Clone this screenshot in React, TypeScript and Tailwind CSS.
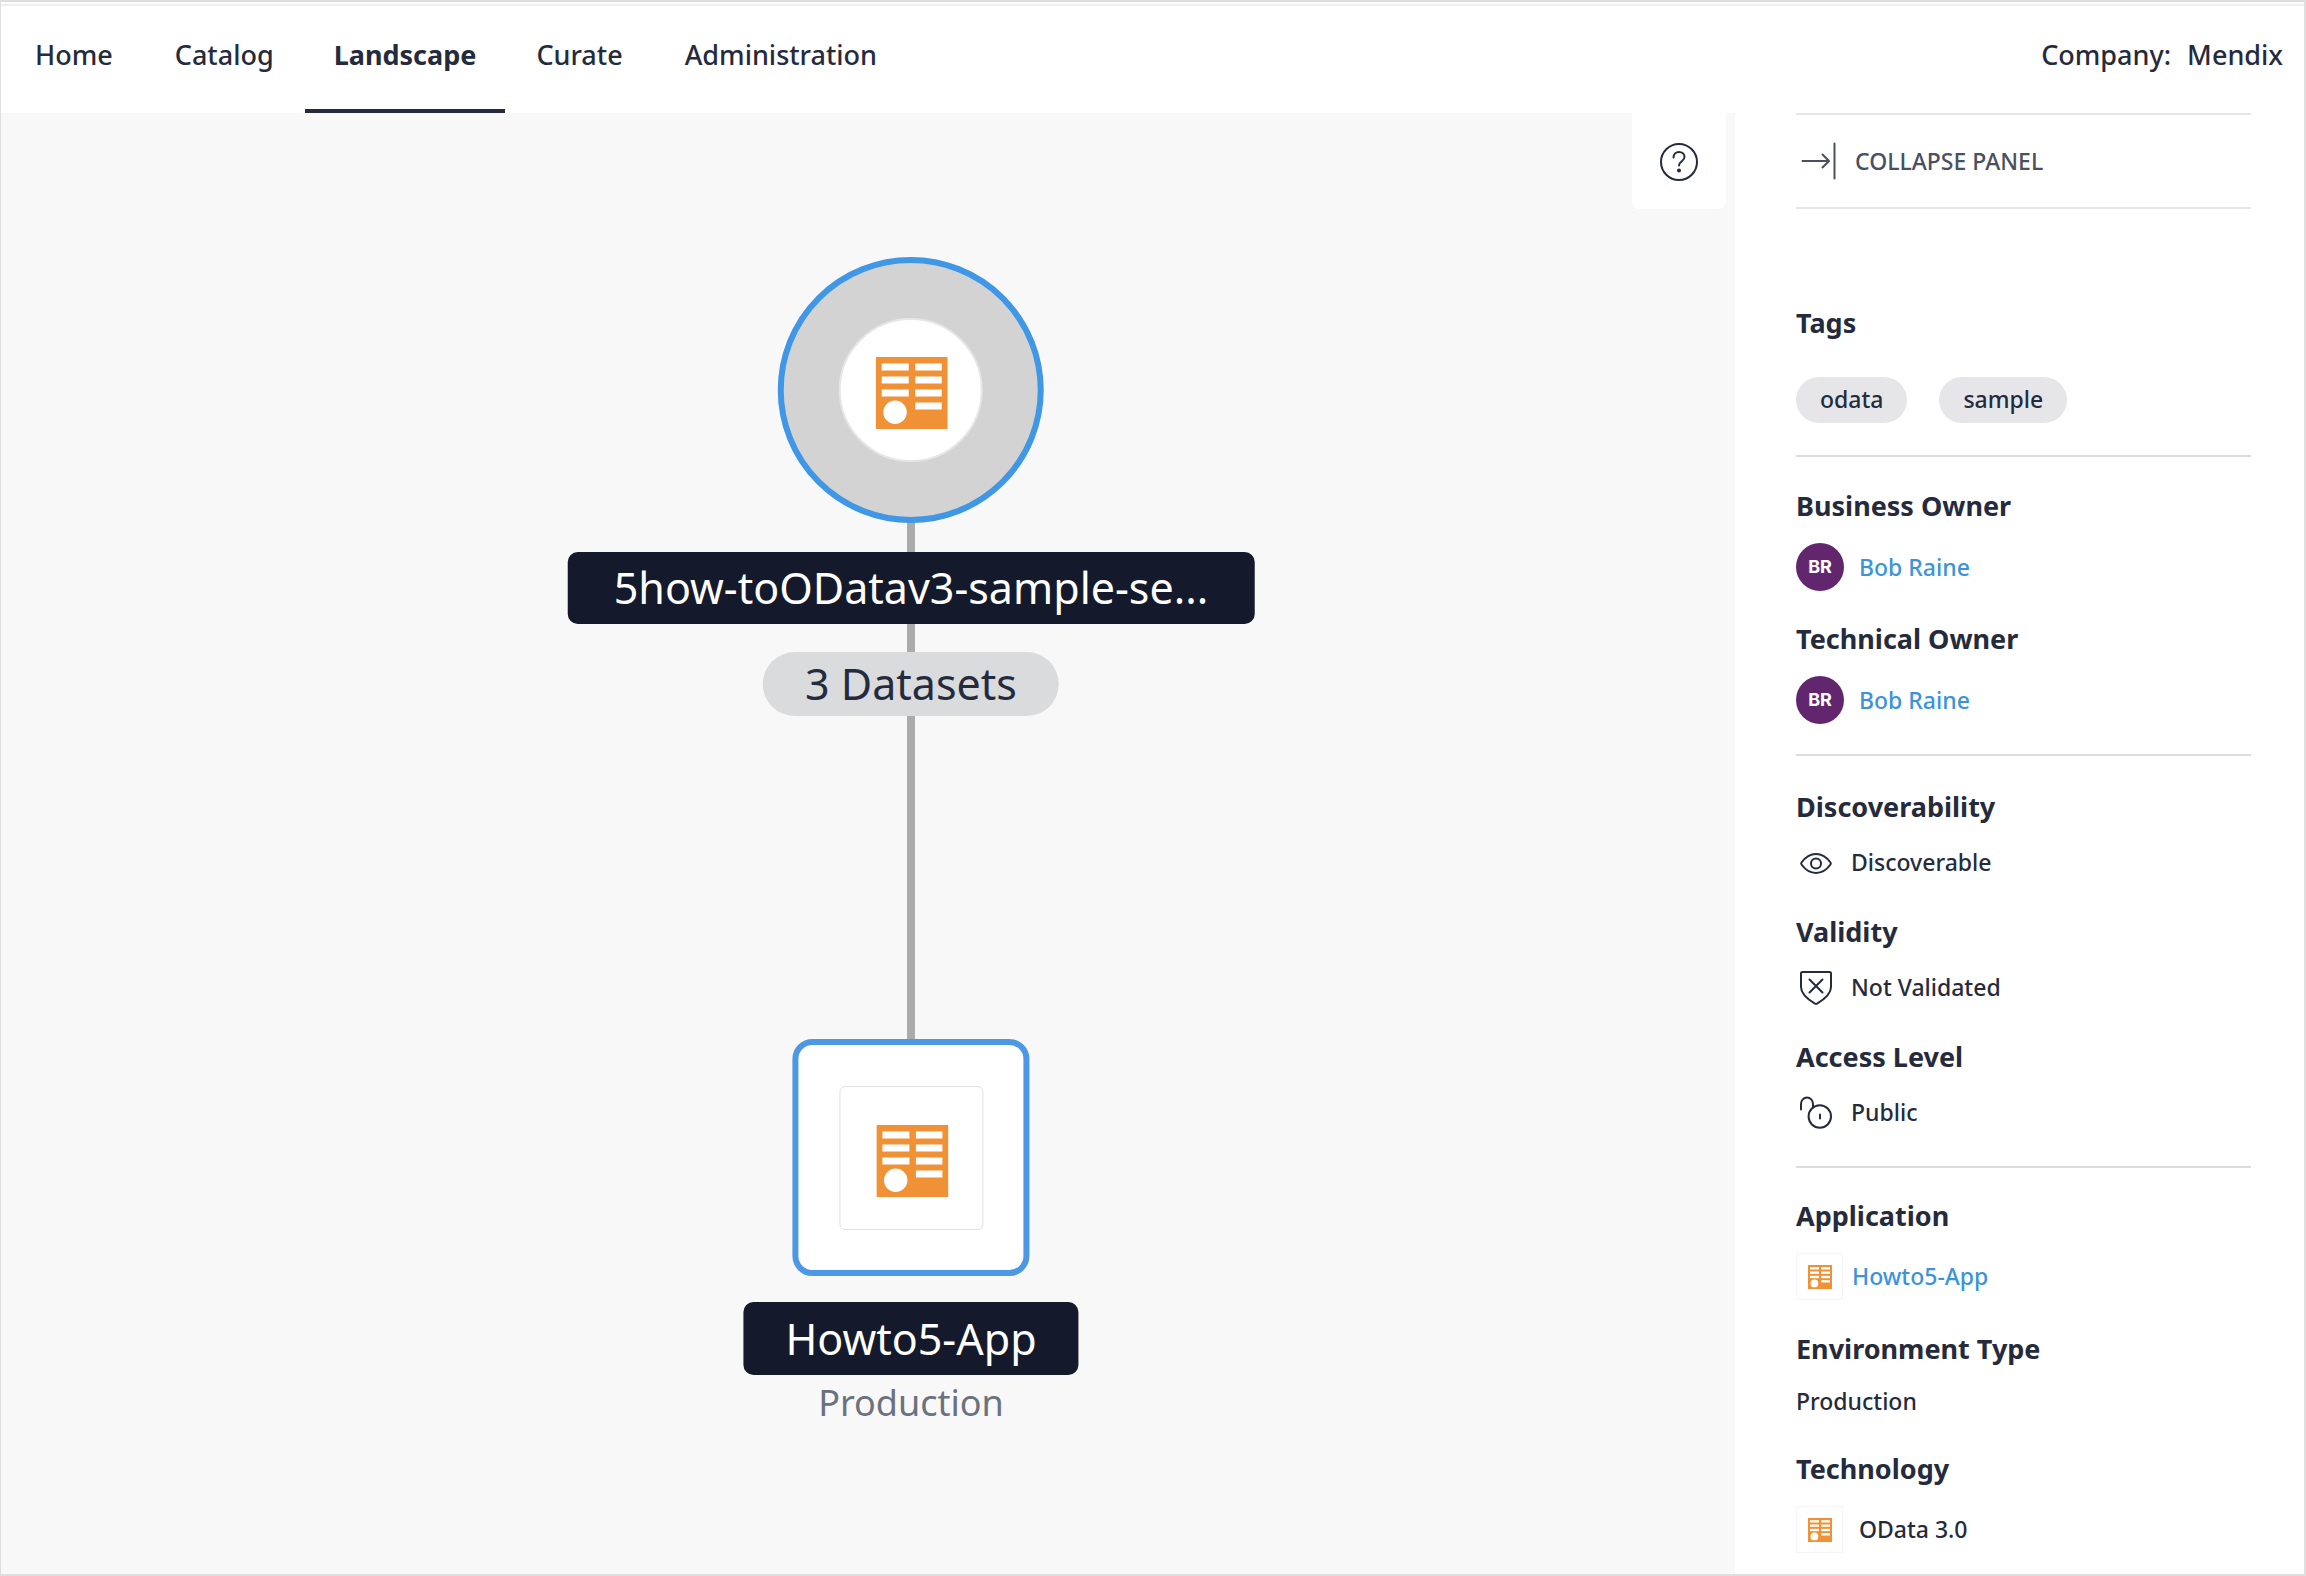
import React from "react";

function DataIcon({ className }: { className: string }) {
  return (
    <svg viewBox="0 0 72 72" className={className} aria-hidden="true">
      <rect width="72" height="72" fill="#f19135" />
      <g fill="#fff">
        <rect x="6" y="6.5" width="27" height="7" />
        <rect x="6" y="19.5" width="27" height="7" />
        <rect x="6" y="32.5" width="27" height="7" />
        <rect x="39.5" y="6.5" width="26.5" height="7" />
        <rect x="39.5" y="19.5" width="26.5" height="7" />
        <rect x="39.5" y="32.5" width="26.5" height="7" />
        <rect x="39.5" y="45.5" width="26.5" height="7" />
        <circle cx="19.3" cy="55.3" r="11.7" />
      </g>
    </svg>
  );
}

function Stroke({ children, className }: { children: React.ReactNode; className: string }) {
  return (
    <svg
      viewBox="0 0 40 40"
      className={className}
      fill="none"
      stroke="currentColor"
      strokeWidth="2"
      strokeLinecap="round"
      strokeLinejoin="round"
      aria-hidden="true"
    >
      {children}
    </svg>
  );
}

const EyeIcon = () => (
  <Stroke className="size-10">
    <path d="M5.500 20.500C9.500 15 14.500 12 20 12S30.500 15 34.500 20.500Q35.200 21.500 34.500 22.500C30.500 28 25.500 31 20 31S9.500 28 5.500 22.500Q4.800 21.500 5.500 20.500Z" />
    <circle cx="20" cy="21.500" r="5" />
  </Stroke>
);

const ShieldIcon = () => (
  <Stroke className="size-10">
    <path d="M6.500 5H33.500Q35 5 35 6.500V20C35 27 28 32.500 21 36.700Q20 37.200 19 36.700C12 32.500 5 27 5 20V6.500Q5 5 6.500 5Z" />
    <path d="M13.500 12.500L26.500 25.500M26.500 12.500L13.500 25.500" />
  </Stroke>
);

const LockIcon = () => (
  <Stroke className="size-10">
    <path d="M5 17.500V12A6 6.500 0 0 1 17 12V15.500" />
    <circle cx="23.800" cy="24.500" r="11.200" />
    <path d="M24 22.500V26.500" />
  </Stroke>
);

const tabs = ["Home", "Catalog", "Landscape", "Curate", "Administration"];

function Header() {
  return (
    <header className="flex h-[111px] shrink-0 items-stretch justify-between pr-[21px] pl-[3px] text-[27px] leading-9 font-medium">
      <nav className="flex" aria-label="Main">
        {tabs.map((t) => (
          <a
            key={t}
            href="#"
            aria-current={t === "Landscape" ? "page" : undefined}
            className={
              t === "Landscape"
                ? "border-b-4 border-[#252b3d] px-[29px] pt-[35px] font-bold"
                : "border-b-4 border-transparent px-[31px] pt-[35px]"
            }
          >
            {t}
          </a>
        ))}
      </nav>
      <p className="flex gap-4 pt-[35px]">
        <span>Company:</span>
        <span>Mendix</span>
      </p>
    </header>
  );
}

function Landscape() {
  return (
    <main className="relative min-w-0 flex-1 overflow-hidden bg-[#f8f8f8]">
      <button
        type="button"
        aria-label="Help"
        className="absolute top-0 right-[9px] flex h-24 w-[94px] items-center justify-center rounded-b-lg bg-white pt-0.5"
      >
        <Stroke className="size-10">
          <circle cx="20" cy="20" r="18" />
          <path d="M14.500 15.500C14.500 12 17 10 20 10S25.500 12 25.500 15C25.500 19 20 19.500 20 23.500" />
          <circle cx="20" cy="28.500" r="1" fill="currentColor" />
        </Stroke>
      </button>

      <div className="absolute top-[409px] left-[906px] h-[517px] w-2 bg-[#ababab]" />

      <div className="absolute top-[144px] left-[910px] flex -translate-x-1/2 flex-col items-center">
        <div className="flex size-[266px] items-center justify-center rounded-full border-[6px] border-[#3f97e6] bg-[#d3d3d3]">
          <div className="flex size-36 items-center justify-center rounded-full border-2 border-[#e6e6e6] bg-white pt-1.5 pl-0.5">
            <DataIcon className="size-[72px]" />
          </div>
        </div>
        <div className="mt-[29px] flex h-[72px] items-center rounded-[10px] bg-[#141a2b] px-[46px] text-[43px] leading-[60px] whitespace-nowrap text-white">
          5how-toODatav3-sample-se...
        </div>
        <div className="mt-7 flex h-16 items-center rounded-full bg-[#dadbdd] px-[42px] text-[43px] leading-[60px] whitespace-nowrap">
          3 Datasets
        </div>
      </div>

      <div className="absolute top-[926px] left-[910px] flex -translate-x-1/2 flex-col items-center">
        <div className="flex size-[237px] items-center justify-center rounded-[20px] border-[6px] border-[#4c98e4] bg-white">
          <div className="flex size-36 items-center justify-center rounded-md border border-[#e0e0e0] pt-1.5 pl-0.5">
            <DataIcon className="size-[72px]" />
          </div>
        </div>
        <div className="mt-[26px] flex h-[73px] items-center rounded-[10px] bg-[#141a2b] px-[42px] text-[43px] leading-[60px] whitespace-nowrap text-white">
          Howto5-App
        </div>
        <div className="mt-1 text-4xl leading-[48px] text-[#6c717e]">Production</div>
      </div>
    </main>
  );
}

function Field({ label, className, children }: { label: string; className: string; children: React.ReactNode }) {
  return (
    <section className={className}>
      <h2 className="text-[27px] leading-9 font-bold">{label}</h2>
      {children}
    </section>
  );
}

function Owner() {
  return (
    <div className="mt-[19px] flex h-12 items-center gap-[15px]">
      <span className="flex size-12 items-center justify-center rounded-full bg-[#62266e] font-['Inter'] text-lg font-bold text-white">
        BR
      </span>
      <a href="#" className="text-[#3b94d9]">
        Bob Raine
      </a>
    </div>
  );
}

function Status({ icon, children }: { icon: React.ReactNode; children: React.ReactNode }) {
  return (
    <div className="mt-[13px] flex h-12 items-center gap-[15px]">
      {icon}
      <span>{children}</span>
    </div>
  );
}

function AppTile() {
  return (
    <span className="flex size-[47px] items-center justify-center rounded-xs border border-[#f5f5f5] pt-0.5">
      <DataIcon className="size-6" />
    </span>
  );
}

function Panel() {
  return (
    <aside className="w-[569px] shrink-0 bg-white pr-[53px] pl-[61px] text-[23px] leading-8 font-medium">
      <button
        type="button"
        className="flex h-24 w-full items-center gap-4 border-y-2 border-[#e6e6e6] text-[#4b5061]"
      >
        <Stroke className="h-10 w-[43px]">
          <path d="M5 20H31M25 13.500L31.500 20L25 26.500M37 2.500V37.500" />
        </Stroke>
        COLLAPSE PANEL
      </button>

      <Field label="Tags" className="mt-24">
        <div className="mt-9 flex gap-8">
          <span className="flex h-[46px] items-center rounded-full bg-[#e6e6e9] px-6 pb-0.5">odata</span>
          <span className="flex h-[46px] items-center rounded-full bg-[#e6e6e9] px-6 pb-0.5">sample</span>
        </div>
      </Field>

      <hr className="mt-8 border-t-2 border-[#dcdcdc]" />
      <Field label="Business Owner" className="mt-[31px]">
        <Owner />
      </Field>
      <Field label="Technical Owner" className="mt-[30px]">
        <Owner />
      </Field>

      <hr className="mt-[30px] border-t-2 border-[#dcdcdc]" />
      <Field label="Discoverability" className="mt-[33px]">
        <Status icon={<EyeIcon />}>Discoverable</Status>
      </Field>
      <Field label="Validity" className="mt-7">
        <Status icon={<ShieldIcon />}>Not Validated</Status>
      </Field>
      <Field label="Access Level" className="mt-7">
        <Status icon={<LockIcon />}>Public</Status>
      </Field>

      <hr className="mt-[30px] border-t-2 border-[#dcdcdc]" />
      <Field label="Application" className="mt-[30px]">
        <div className="mt-[18px] flex h-12 items-center gap-[9px]">
          <AppTile />
          <a href="#" className="text-[#3b94d9]">
            Howto5-App
          </a>
        </div>
      </Field>
      <Field label="Environment Type" className="mt-[31px]">
        <p className="mt-[18px]">Production</p>
      </Field>
      <Field label="Technology" className="mt-[34px]">
        <div className="mt-[18px] flex h-12 items-center gap-4">
          <AppTile />
          <span>OData 3.0</span>
        </div>
      </Field>
    </aside>
  );
}

export default function App() {
  return (
    <div className="flex min-h-screen flex-col border-2 border-l border-[#dedede] bg-white font-['Noto_Sans',sans-serif] text-[#252b3d]">
      <div className="relative">
        <div className="absolute inset-x-0 top-0.5 h-0.5 bg-[#efefef]" />
      </div>
      <Header />
      <div className="flex flex-1">
        <Landscape />
        <Panel />
      </div>
    </div>
  );
}
